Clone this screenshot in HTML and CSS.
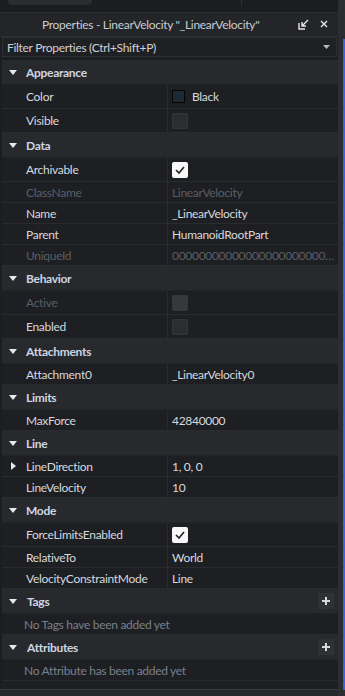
FILE: index.html
```html
<!DOCTYPE html>
<html>
<head>
<meta charset="utf-8">
<link rel="stylesheet" href="styles.css">
</head>
<body>
<div class="left">
  <div class="topstrip">
    <div class="tab"></div>
    <div class="vdiv"></div>
  </div>
  <div class="titlebar">
    <span class="title">Properties - LinearVelocity "_LinearVelocity"</span>
    <span class="ticons">
      <svg width="11" height="11" viewBox="0 0 11 11"><path d="M1 4v6h6" fill="none" stroke="#e6e6e6" stroke-width="1.4"/><path d="M10 1L4 7M4 3v4h4" fill="none" stroke="#e6e6e6" stroke-width="1.4"/></svg>
      <svg width="8" height="8" viewBox="0 0 8 8"><path d="M1 1l6 6M7 1L1 7" stroke="#e6e6e6" stroke-width="1.4"/></svg>
    </span>
  </div>
  <div class="filter">
    <span>Filter Properties (Ctrl+Shift+P)</span>
    <svg width="7" height="4" viewBox="0 0 7 4"><path d="M0 0h7L3.5 4z" fill="#b8b8b8"/></svg>
  </div>
  <div class="list">
    <div class="hdr"><span class="tri"></span><b>Appearance</b></div>
    <div class="row tall"><span class="n">Color</span><span class="v"><i class="swatch"></i>Black</span></div>
    <div class="row tall"><span class="n">Visible</span><span class="v"><i class="cb"></i></span></div>

    <div class="hdr"><span class="tri"></span><b>Data</b></div>
    <div class="row tall"><span class="n">Archivable</span><span class="v"><i class="cb on"><svg width="10" height="8" viewBox="0 0 10 8"><path d="M1 4l3 3 5-6" fill="none" stroke="#1e1f22" stroke-width="1.6"/></svg></i></span></div>
    <div class="row dis"><span class="n">ClassName</span><span class="v">LinearVelocity</span></div>
    <div class="row"><span class="n">Name</span><span class="v">_LinearVelocity</span></div>
    <div class="row"><span class="n">Parent</span><span class="v">HumanoidRootPart</span></div>
    <div class="row dis"><span class="n">UniqueId</span><span class="v">0000000000000000000000000000000000</span></div>

    <div class="hdr"><span class="tri"></span><b>Behavior</b></div>
    <div class="row tall dis"><span class="n">Active</span><span class="v"><i class="cb off"></i></span></div>
    <div class="row tall"><span class="n">Enabled</span><span class="v"><i class="cb"></i></span></div>

    <div class="hdr"><span class="tri"></span><b>Attachments</b></div>
    <div class="row"><span class="n">Attachment0</span><span class="v">_LinearVelocity0</span></div>

    <div class="hdr"><span class="tri"></span><b>Limits</b></div>
    <div class="row"><span class="n">MaxForce</span><span class="v">42840000</span></div>

    <div class="hdr"><span class="tri"></span><b>Line</b></div>
    <div class="row"><span class="n"><span class="rtri"></span>LineDirection</span><span class="v">1, 0, 0</span></div>
    <div class="row"><span class="n">LineVelocity</span><span class="v">10</span></div>

    <div class="hdr"><span class="tri"></span><b>Mode</b></div>
    <div class="row tall"><span class="n">ForceLimitsEnabled</span><span class="v"><i class="cb on"><svg width="10" height="8" viewBox="0 0 10 8"><path d="M1 4l3 3 5-6" fill="none" stroke="#1e1f22" stroke-width="1.6"/></svg></i></span></div>
    <div class="row"><span class="n">RelativeTo</span><span class="v">World</span></div>
    <div class="row"><span class="n">VelocityConstraintMode</span><span class="v">Line</span></div>

    <div class="hdr"><span class="tri"></span><b class="tb">Tags</b><span class="plus"></span></div>
    <div class="row empty">No Tags have been added yet</div>

    <div class="hdr"><span class="tri"></span><b class="tb">Attributes</b><span class="plus"></span></div>
    <div class="row empty">No Attribute has been added yet</div>
    <div class="tail"></div>
  </div>
  <div class="bottom"></div>
</div>
<div class="rail"><div class="blue"></div></div>
</body>
</html>
```

FILE: styles.css
```css
html, body {
  margin: 0;
  padding: 0;
}
body {
  width: 345px;
  height: 696px;
  overflow: hidden;
  background: #1c1d20;
  display: flex;
  font-family: Lato, "Open Sans", sans-serif;
  font-size: 12px;
  letter-spacing: -0.3px;
  color: #d6d9de;
}
.left {
  width: 338px;
  display: flex;
  flex-direction: column;
}
.rail {
  width: 7px;
  background: #2c2d31;
  display: flex;
  justify-content: flex-end;
}
.blue {
  width: 2px;
  margin-top: 39px;
  height: 651px;
  background: #3a63e0;
}
.topstrip {
  height: 12px;
  display: flex;
  background: #1c1d20;
}
.tab {
  margin-left: 8px;
  width: 84px;
  height: 5px;
  background: #2b2c30;
  border-radius: 0 0 4px 4px;
}
.vdiv {
  margin-left: 149px;
  width: 1px;
  height: 6px;
  background: #2e2f33;
}
.titlebar {
  height: 24px;
  background: #242529;
  border-top: 1px solid #2c2d31;
  border-bottom: 1px solid #2c2d31;
  display: flex;
  align-items: center;
  justify-content: space-between;
}
.title {
  margin-left: 42px;
  color: #c9ccd2;
}
.ticons {
  display: flex;
  align-items: center;
  gap: 11px;
  margin-right: 10px;
}
.filter {
  margin: 0 1px 0 2px;
  height: 19px;
  border: 1px solid #2f3034;
  background: #1f2023;
  display: flex;
  align-items: center;
  justify-content: space-between;
  padding: 0 6px 0 4px;
  color: #cfd1d5;
}
.list {
  margin-top: 3px;
  margin-left: 2px;
  flex: 1;
  background: #1e1f23;
}
.hdr {
  height: 24px;
  border-bottom: 1px solid #222327;
  background: #28292d;
  display: flex;
  align-items: center;
  color: #cdd6e2;
}
.hdr b {
  font-weight: 700;
}
.hdr .tb {
  margin-left: 1px;
}
.tri {
  width: 0;
  height: 0;
  border-left: 4px solid transparent;
  border-right: 4px solid transparent;
  border-top: 5px solid #e8e8e8;
  margin-left: 7px;
  margin-right: 9px;
}
.plus {
  margin-left: auto;
  margin-right: 4px;
  width: 16px;
  height: 16px;
  background: #303135;
  position: relative;
}
.plus::before, .plus::after {
  content: "";
  position: absolute;
  background: #d8d8d8;
}
.plus::before { left: 4px; top: 7px; width: 8px; height: 2px; }
.plus::after { left: 7px; top: 4px; width: 2px; height: 8px; }
.row {
  height: 20px;
  border-bottom: 1px solid #2a2b2f;
  display: grid;
  grid-template-columns: 166px 1fr;
  align-items: center;
  background: #1e1f23;
}
.row.tall {
  height: 23px;
}
.n {
  height: 100%;
  display: flex;
  align-items: center;
  padding-left: 24px;
  border-right: 1px solid #2a2b2f;
  position: relative;
}
.v {
  padding-left: 4px;
  display: flex;
  align-items: center;
  white-space: nowrap;
  overflow: hidden;
  text-overflow: ellipsis;
}
.dis .n, .dis .v {
  color: #5b5e65;
}
.dis .v {
  display: block;
}
.rtri {
  position: absolute;
  left: 9px;
  top: 6px;
  width: 0;
  height: 0;
  border-top: 4px solid transparent;
  border-bottom: 4px solid transparent;
  border-left: 5px solid #e8e8e8;
}
.swatch {
  width: 11px;
  height: 11px;
  border: 1px solid #050505;
  background: #1b2a35;
  margin-right: 7px;
}
.cb {
  width: 16px;
  height: 16px;
  border-radius: 2px;
  background: #2c2d31;
  box-shadow: inset 0 0 0 1px #33343a;
  display: flex;
  align-items: center;
  justify-content: center;
}
.cb.off {
  background: #37383c;
  box-shadow: none;
}
.cb.on {
  background: #f7f7f7;
  box-shadow: none;
}
.row.empty {
  display: flex;
  padding-left: 22px;
  color: #7a808a;
}
.tail {
  height: 8px;
}
.bottom {
  height: 6px;
  border-top: 1px solid #3a3b40;
  background: #27282c;
}
```
